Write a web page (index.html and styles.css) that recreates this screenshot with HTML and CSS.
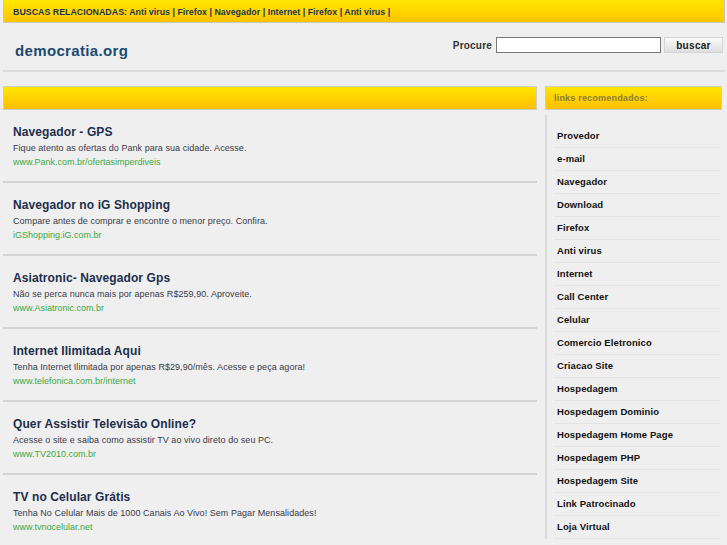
FILE: index.html
```html
<!DOCTYPE html>
<html lang="pt">
<head>
<meta charset="utf-8">
<title>democratia.org</title>
<link rel="stylesheet" href="styles.css">
</head>
<body>
<div class="page">
  <div class="topbar">BUSCAS RELACIONADAS: <a href="#">Anti virus</a> | <a href="#">Firefox</a> | <a href="#">Navegador</a> | <a href="#">Internet</a> | <a href="#">Firefox</a> | <a href="#">Anti virus</a> |</div>
  <div class="header">
    <div class="logo">democratia.org</div>
    <form class="search">
      <label class="search-label">Procure</label>
      <input class="search-input" type="text">
      <button class="search-btn" type="button">buscar</button>
    </form>
  </div>
  <div class="columns">
    <div class="main">
      <div class="ybar"></div>
      <div class="result">
        <div class="r-title">Navegador - GPS</div>
        <div class="r-desc">Fique atento as ofertas do Pank para sua cidade. Acesse.</div>
        <div class="r-url">www.Pank.com.br/ofertasimperdiveis</div>
      </div>
      <div class="result">
        <div class="r-title">Navegador no iG Shopping</div>
        <div class="r-desc">Compare antes de comprar e encontre o menor preço. Confira.</div>
        <div class="r-url">iGShopping.iG.com.br</div>
      </div>
      <div class="result">
        <div class="r-title">Asiatronic- Navegador Gps</div>
        <div class="r-desc">Não se perca nunca mais por apenas R$259,90. Aproveite.</div>
        <div class="r-url">www.Asiatronic.com.br</div>
      </div>
      <div class="result">
        <div class="r-title">Internet Ilimitada Aqui</div>
        <div class="r-desc">Tenha Internet Ilimitada por apenas R$29,90/mês. Acesse e peça agora!</div>
        <div class="r-url">www.telefonica.com.br/internet</div>
      </div>
      <div class="result">
        <div class="r-title">Quer Assistir Televisão Online?</div>
        <div class="r-desc">Acesse o site e saiba como assistir TV ao vivo direto do seu PC.</div>
        <div class="r-url">www.TV2010.com.br</div>
      </div>
      <div class="result">
        <div class="r-title">TV no Celular Grátis</div>
        <div class="r-desc">Tenha No Celular Mais de 1000 Canais Ao Vivo! Sem Pagar Mensalidades!</div>
        <div class="r-url">www.tvnocelular.net</div>
      </div>
    </div>
    <div class="side">
      <div class="ybar side-head">links recomendados:</div>
      <ul class="links">
        <li>Provedor</li>
        <li>e-mail</li>
        <li>Navegador</li>
        <li>Download</li>
        <li>Firefox</li>
        <li>Anti virus</li>
        <li>Internet</li>
        <li>Call Center</li>
        <li>Celular</li>
        <li>Comercio Eletronico</li>
        <li>Criacao Site</li>
        <li>Hospedagem</li>
        <li>Hospedagem Dominio</li>
        <li>Hospedagem Home Page</li>
        <li>Hospedagem PHP</li>
        <li>Hospedagem Site</li>
        <li>Link Patrocinado</li>
        <li>Loja Virtual</li>
      </ul>
    </div>
  </div>
</div>
</body>
</html>
```
FILE: styles.css
```css
html, body {
  margin: 0;
  padding: 0;
  background: #efefef;
  font-family: "Liberation Sans", Arial, sans-serif;
  overflow: hidden;
}
.page {
  width: 722px;
  margin-left: 3px;
}
.topbar {
  box-sizing: border-box;
  height: 23px;
  line-height: 24px;
  padding-left: 9px;
  background: linear-gradient(#ffe600, #ffc400);
  border: 1px solid #c8c8b8;
  border-top: none;
  font-size: 8.8px;
  font-weight: bold;
  color: #1c3556;
  letter-spacing: 0.03px;
}
.topbar a {
  color: #1c3556;
  text-decoration: none;
}
.header {
  display: flex;
  justify-content: space-between;
  align-items: flex-start;
  height: 47px;
  border-bottom: 2px solid #dcdcdc;
}
.logo {
  margin-top: 19px;
  margin-left: 12px;
  font-size: 15px;
  font-weight: bold;
  color: #1d4a70;
  letter-spacing: 0.35px;
}
.search {
  display: flex;
  align-items: center;
  margin: 14px 2px 0 0;
}
.search-label {
  font-size: 10px;
  font-weight: bold;
  color: #333;
  margin-right: 4px;
  letter-spacing: 0.2px;
}
.search-input {
  width: 165px;
  height: 16px;
  box-sizing: border-box;
  border: 1px solid #777;
  background: #fff;
  padding: 0;
  margin: 0;
}
.search-btn {
  margin-left: 3px;
  width: 59px;
  height: 16px;
  box-sizing: border-box;
  border: 1px solid #d4d4d4;
  background: linear-gradient(#fafafa, #dedede);
  font-family: "Liberation Sans", Arial, sans-serif;
  font-size: 10px;
  font-weight: bold;
  color: #222;
  padding: 0;
  letter-spacing: 0.3px;
}
.columns {
  display: flex;
  gap: 8px;
  margin-top: 14px;
}
.main {
  width: 534px;
}
.side {
  width: 177px;
}
.ybar {
  height: 24px;
  box-sizing: border-box;
  background: linear-gradient(#ffe600, #ffbe00);
  border: 1px solid #cfcfc0;
}
.side-head {
  font-size: 9px;
  font-weight: bold;
  color: #8a7d3a;
  line-height: 22px;
  padding-left: 8px;
  letter-spacing: 0.2px;
}
.result {
  height: 71px;
  border-bottom: 2px solid #d4d4d4;
  padding-left: 10px;
}
.r-title {
  padding-top: 14px;
  font-size: 12px;
  font-weight: bold;
  color: #1c2e4a;
  line-height: 16px;
  letter-spacing: 0.1px;
}
.r-desc {
  font-size: 9px;
  color: #3a3a48;
  line-height: 14px;
  margin-top: 1px;
  letter-spacing: 0.05px;
}
.r-url {
  font-size: 9px;
  color: #3fa83f;
  line-height: 14px;
}
.links {
  list-style: none;
  margin: 5px 0 0 0;
  padding: 10px 1px 0 7px;
  border-left: 2px solid #dcdcdc;
}
.links li {
  height: 22px;
  line-height: 22px;
  border-bottom: 1px solid #e4e4e4;
  padding-left: 3px;
  font-size: 9.5px;
  font-weight: bold;
  color: #111;
  letter-spacing: 0.1px;
}
```
